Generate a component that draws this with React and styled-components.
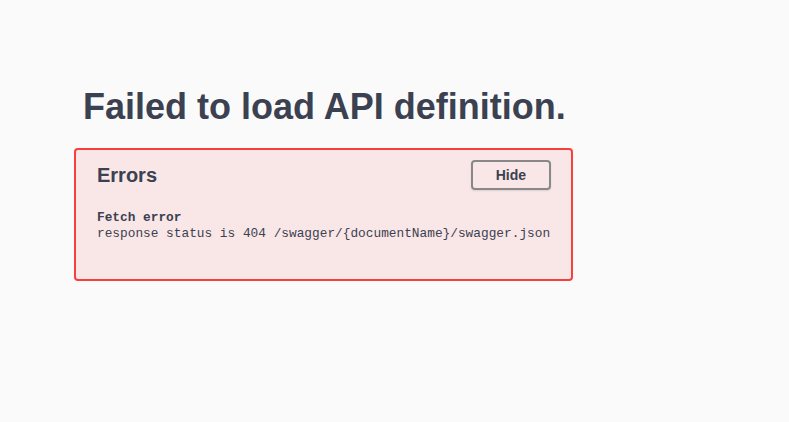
import React from "react";
import styled, { createGlobalStyle } from "styled-components";

const GlobalStyle = createGlobalStyle`
    html, body {
        margin: 0;
        padding: 0;
        background: #fafafa;
    }
    body {
        font-family: "Liberation Sans", Arial, sans-serif;
        color: #3b4151;
    }
`;

const Page = styled.div`
    padding: 84px 0 0 74px;
    min-height: 422px;
    box-sizing: border-box;
`;

const Title = styled.h2`
    margin: 0 0 18px 9px;
    font-size: 36px;
    font-weight: 700;
    line-height: 46px;
    color: #3b4151;
`;

const ErrorsWrapper = styled.div`
    width: 499px;
    box-sizing: border-box;
    padding: 10px 20px 37px 21px;
    border: 2px solid #f93e3e;
    border-radius: 4px;
    background: rgba(249, 62, 62, 0.1);
`;

const Header = styled.div`
    display: flex;
    align-items: center;
`;

const HeaderTitle = styled.h4`
    flex: 1;
    margin: 0;
    font-size: 20px;
    font-weight: 700;
    color: #3b4151;
`;

const Button = styled.button`
    font-family: "Liberation Sans", Arial, sans-serif;
    font-size: 14px;
    font-weight: 700;
    color: #3b4151;
    padding: 5px 23px;
    border: 2px solid #888;
    border-radius: 4px;
    background: transparent;
    box-shadow: 0 1px 2px rgba(0, 0, 0, 0.1);
    cursor: pointer;
`;

const ErrorItem = styled.div`
    margin-top: 20px;
    font-family: "Liberation Mono", monospace;
    font-size: 12.8px;
    line-height: 16px;
    color: #3b4151;
`;

const ErrorSource = styled.div`
    font-weight: 700;
`;

const ErrorMessage = styled.div`
    white-space: pre-line;
`;

export default function App() {
    return (
        <>
            <GlobalStyle />
            <Page>
                <Title>Failed to load API definition.</Title>
                <ErrorsWrapper>
                    <Header>
                        <HeaderTitle>Errors</HeaderTitle>
                        <Button>Hide</Button>
                    </Header>
                    <ErrorItem>
                        <ErrorSource>Fetch error</ErrorSource>
                        <ErrorMessage>response status is 404 /swagger/{"{documentName}"}/swagger.json</ErrorMessage>
                    </ErrorItem>
                </ErrorsWrapper>
            </Page>
        </>
    );
}
